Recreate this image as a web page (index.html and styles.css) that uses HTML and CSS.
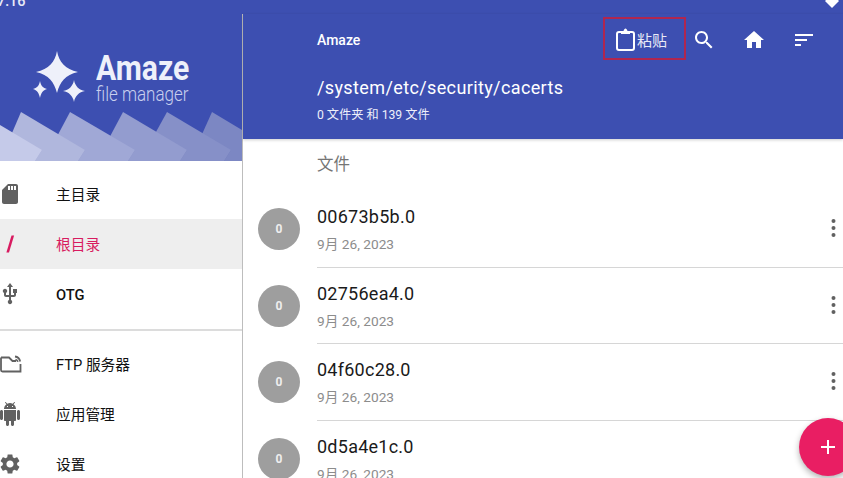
FILE: index.html
```html
<!DOCTYPE html>
<html lang="zh">
<head>
<meta charset="utf-8">
<title>Amaze</title>
<link rel="stylesheet" href="styles.css">
</head>
<body>
<div class="screen">
  <div class="statusbar">
    <span class="clock">7:16</span>
    <svg class="signal" viewBox="0 0 14 8"><path d="M0 1 7-6l7 7-7 7z"/></svg>
  </div>
  <div class="main">
    <aside class="drawer">
      <div class="hero">
        <svg class="hills" viewBox="0 0 242 147">
          <polygon points="212,98 242,116 242,147 190,147" fill="#7c87c3"/>
          <polygon points="231,136 224,147 190,147 205,136" fill="#6b76b9"/>
          <polygon points="167,98 231,136 224,147 140,147" fill="#8690c8"/>
          <polygon points="187,136 180,147 150,147 175,136" fill="#757fbe"/>
          <polygon points="123,98 187,136 180,147 97,147" fill="#939ccf"/>
          <polygon points="135,136 128,147 100,147 125,136" fill="#818bc5"/>
          <polygon points="70,98 135,136 128,147 44,147" fill="#a0a8d6"/>
          <polygon points="85,136 78,147 50,147 75,136" fill="#8c95cb"/>
          <polygon points="21,98 85,136 78,147 0,147" fill="#b0b7dd"/>
          <polygon points="42,136 35,147 20,147 32,136" fill="#9aa2d2"/>
          <polygon points="-5,108 42,136 35,147 -5,147" fill="#c5cae9"/>
        </svg>
        <div class="brand">
          <svg class="stars" viewBox="0 0 54 52">
            <path d="M24 0C26 11 32 18 45 21 32 24 27 31 24 42 21 31 16 24 3 21 16 18 22 11 24 0Z"/>
            <path d="M7 30C8 35 10 37 14 38 10 39 8 42 7 47 6 42 4 39 0 38 4 37 6 35 7 30Z"/>
            <path d="M41 29C42 35 46 39 52 40 46 41 42 45 41 51 40 45 36 41 30 40 36 39 40 35 41 29Z"/>
          </svg>
          <div class="brand-text">
            <span class="brand-name">Amaze</span>
            <span class="brand-sub">file manager</span>
          </div>
        </div>
      </div>
      <nav class="nav">
        <div class="nav-item">
          <svg class="nav-icon" viewBox="0 0 24 24"><path d="M18 2h-8L4.020 8 4 20c0 1.100.9 2 2 2h12c1.100 0 2-.9 2-2V4c0-1.100-.9-2-2-2zm-6 6h-2V4h2v4zm3 0h-2V4h2v4zm3 0h-2V4h2v4z"/></svg>
          <span>主目录</span>
        </div>
        <div class="nav-item active">
          <svg class="nav-icon" viewBox="0 0 24 24"><path d="M13.500 3.500h2.600L11 20.500H8.400z"/></svg>
          <span>根目录</span>
        </div>
        <div class="nav-item latin">
          <svg class="nav-icon" viewBox="0 0 24 24"><path d="M15 7v4h1v2h-3V5h2l-3-4-3 4h2v8H8v-2.070c.7-.37 1.200-1.080 1.200-1.930 0-1.210-.99-2.200-2.200-2.200-1.210 0-2.200.99-2.200 2.200 0 .85.5 1.560 1.200 1.930V13c0 1.110.89 2 2 2h3v3.050c-.71.37-1.200 1.100-1.200 1.950 0 1.220.99 2.200 2.200 2.200 1.210 0 2.200-.98 2.200-2.200 0-.85-.49-1.580-1.200-1.950V15h3c1.110 0 2-.89 2-2v-2h1V7h-4z"/></svg>
          <span>OTG</span>
        </div>
        <div class="nav-divider"></div>
        <div class="nav-item">
          <svg class="nav-icon ftp" viewBox="0 0 24 24"><path d="M3 5.500h8l3.500 3.500H18M3 5.500V18c0 1 .5 1.500 1.500 1.500h18V12"/><path d="M17 4.500c2.700.4 4.600 2.300 5.200 5M17.500 7.500c1.200.3 2 1 2.400 2.200"/></svg>
          <span>FTP 服务器</span>
        </div>
        <div class="nav-item">
          <svg class="nav-icon" viewBox="0 0 24 24"><path d="M6 18c0 .55.45 1 1 1h1v3.500c0 .83.67 1.500 1.500 1.500s1.500-.67 1.500-1.500V19h2v3.500c0 .83.67 1.500 1.500 1.500s1.500-.67 1.500-1.500V19h1c.55 0 1-.45 1-1V8H6v10zM3.500 8C2.670 8 2 8.670 2 9.500v7c0 .83.67 1.500 1.500 1.500S5 17.330 5 16.500v-7C5 8.670 4.330 8 3.500 8zm17 0c-.83 0-1.500.67-1.500 1.500v7c0 .83.67 1.500 1.500 1.500s1.500-.67 1.500-1.500v-7c0-.83-.67-1.500-1.500-1.500zm-4.970-5.840l1.300-1.300c.2-.2.2-.51 0-.71-.2-.2-.51-.2-.71 0l-1.480 1.480C13.850 1.230 12.950 1 12 1c-.96 0-1.860.23-2.660.63L7.850.15c-.2-.2-.51-.2-.71 0-.2.2-.2.51 0 .71l1.310 1.310C6.970 3.260 6 5.010 6 7h12c0-1.990-.97-3.750-2.470-4.840zM10 5H9V4h1v1zm5 0h-1V4h1v1z"/></svg>
          <span>应用管理</span>
        </div>
        <div class="nav-item">
          <svg class="nav-icon" viewBox="0 0 24 24"><path d="M19.140 12.940c.04-.3.06-.61.06-.94 0-.32-.02-.64-.07-.94l2.030-1.580c.18-.14.23-.41.12-.61l-1.920-3.320c-.12-.22-.37-.29-.59-.22l-2.390.96c-.5-.38-1.030-.7-1.620-.94l-.36-2.540c-.04-.24-.24-.41-.48-.41h-3.840c-.24 0-.43.17-.47.41l-.36 2.540c-.59.24-1.130.57-1.620.94l-2.390-.96c-.22-.08-.47 0-.59.22L2.740 8.870c-.12.21-.08.47.12.61l2.030 1.580c-.05.3-.09.63-.09.94s.02.64.07.94l-2.030 1.580c-.18.14-.23.41-.12.61l1.920 3.320c.12.22.37.29.59.22l2.390-.96c.5.38 1.030.7 1.620.94l.36 2.540c.05.24.24.41.48.41h3.840c.24 0 .44-.17.47-.41l.36-2.540c.59-.24 1.130-.56 1.620-.94l2.390.96c.22.08.47 0 .59-.22l1.920-3.320c.12-.22.07-.47-.12-.61l-2.010-1.580zM12 15.600c-1.980 0-3.600-1.620-3.600-3.600s1.620-3.600 3.600-3.600 3.600 1.620 3.600 3.600-1.620 3.600-3.600 3.600z"/></svg>
          <span>设置</span>
        </div>
      </nav>
    </aside>
    <section class="content">
      <header class="toolbar">
        <div class="toolbar-row">
          <span class="app-title">Amaze</span>
          <div class="actions">
            <div class="paste">
              <svg class="clip-icon" viewBox="0 0 19 23"><rect class="clip-body" x="1" y="4" width="17" height="18" rx="2"/><path d="M5 3h2.500C8 1.500 8.700.5 9.500.5S11 1.500 11.500 3H14v3H5z"/></svg>
              <span>粘贴</span>
            </div>
            <svg class="tool-icon" viewBox="0 0 24 24"><path d="M15.500 14h-.79l-.28-.27C15.410 12.590 16 11.110 16 9.500 16 5.910 13.090 3 9.500 3S3 5.910 3 9.500 5.910 16 9.500 16c1.610 0 3.090-.59 4.230-1.570l.27.28v.79l5 4.990L20.490 19l-4.990-5zm-6 0C7.010 14 5 11.990 5 9.500S7.010 5 9.500 5 14 7.010 14 9.500 11.990 14 9.500 14z"/></svg>
            <svg class="tool-icon" viewBox="0 0 24 24"><path d="M10 20v-6h4v6h5v-8h3L12 3 2 12h3v8z"/></svg>
            <svg class="tool-icon" viewBox="0 0 24 24"><path d="M3 18h6v-2H3v2zM3 6v2h18V6H3zm0 7h12v-2H3v2z"/></svg>
          </div>
        </div>
        <div class="path">/system/etc/security/cacerts</div>
        <div class="summary">0 文件夹 和 139 文件</div>
      </header>
      <div class="section-label">文件</div>
      <div class="file-list">
        <div class="file-row">
          <div class="thumb">0</div>
          <div class="file-body">
            <div class="file-text"><div class="file-name">00673b5b.0</div><div class="file-date">9月 26, 2023</div></div>
            <svg class="more" viewBox="0 0 4 18"><circle cx="2" cy="2" r="2"/><circle cx="2" cy="9" r="2"/><circle cx="2" cy="16" r="2"/></svg>
          </div>
        </div>
        <div class="file-row">
          <div class="thumb">0</div>
          <div class="file-body">
            <div class="file-text"><div class="file-name">02756ea4.0</div><div class="file-date">9月 26, 2023</div></div>
            <svg class="more" viewBox="0 0 4 18"><circle cx="2" cy="2" r="2"/><circle cx="2" cy="9" r="2"/><circle cx="2" cy="16" r="2"/></svg>
          </div>
        </div>
        <div class="file-row">
          <div class="thumb">0</div>
          <div class="file-body">
            <div class="file-text"><div class="file-name">04f60c28.0</div><div class="file-date">9月 26, 2023</div></div>
            <svg class="more" viewBox="0 0 4 18"><circle cx="2" cy="2" r="2"/><circle cx="2" cy="9" r="2"/><circle cx="2" cy="16" r="2"/></svg>
          </div>
        </div>
        <div class="file-row">
          <div class="thumb">0</div>
          <div class="file-body">
            <div class="file-text"><div class="file-name">0d5a4e1c.0</div><div class="file-date">9月 26, 2023</div></div>
          </div>
        </div>
      </div>
    </section>
  </div>
  <div class="highlight"></div>
  <div class="fab"><svg viewBox="0 0 24 24"><path d="M19 13h-6v6h-2v-6H5v-2h6V5h2v6h6v2z"/></svg></div>
</div>
</body>
</html>
```
FILE: styles.css
```css
* { box-sizing: border-box; }
html, body { margin: 0; padding: 0; }
body {
  width: 843px;
  height: 478px;
  overflow: hidden;
  background: #fff;
  font-family: Roboto, "Noto Sans CJK SC", sans-serif;
}
.screen {
  position: relative;
  width: 843px;
  height: 478px;
  overflow: hidden;
  display: flex;
  flex-direction: column;
}
.statusbar {
  flex: none;
  height: 14px;
  background: #3d4fb1;
  display: flex;
  justify-content: space-between;
  color: #fff;
  overflow: hidden;
}
.clock {
  margin-left: -3px;
  margin-top: -6px;
  font-size: 14.5px;
  line-height: 16px;
  font-weight: 500;
  color: #e8eaf6;
}
.signal {
  width: 14px;
  height: 8px;
  margin-right: 4px;
  fill: #fff;
  overflow: hidden;
}
.main {
  flex: 1;
  min-height: 0;
  display: flex;
}
.drawer {
  flex: none;
  width: 243px;
  border-right: 1px solid #bdbdbd;
  display: flex;
  flex-direction: column;
  overflow: hidden;
}
.hero {
  position: relative;
  flex: none;
  height: 147px;
  background: #3d4fb1;
  padding: 37px 0 0 33px;
}
.hills {
  position: absolute;
  left: 0;
  top: 0;
  width: 242px;
  height: 147px;
}
.brand {
  position: relative;
  display: flex;
  gap: 9px;
}
.stars {
  width: 54px;
  height: 52px;
  fill: #eef0fa;
}
.brand-text {
  display: flex;
  flex-direction: column;
  padding-top: 1px;
}
.brand-name {
  font-size: 35px;
  line-height: 33px;
  font-weight: 700;
  color: #eef0fa;
  transform-origin: left;
  transform: scaleX(0.86);
}
.brand-sub {
  font-size: 20px;
  line-height: 19px;
  font-weight: 300;
  color: #c9cfee;
  transform-origin: left;
  transform: scaleX(0.85);
  white-space: nowrap;
}
.nav {
  padding-top: 8px;
}
.nav-item {
  height: 50px;
  display: flex;
  align-items: center;
  gap: 46px;
  font-size: 14.7px;
  color: #111;
}
.nav-item span {
  padding-bottom: 2px;
}
.nav-item.latin span {
  padding-top: 4px;
  font-weight: 500;
}
.nav-item.active {
  background: #eeeeee;
  color: #d81b60;
}
.nav-icon {
  flex: none;
  width: 24px;
  height: 24px;
  margin-left: -2px;
  margin-right: -12px;
  fill: #616161;
}
.nav-icon.ftp {
  fill: none;
  stroke: #616161;
  stroke-width: 1.8;
}
.nav-item.active .nav-icon {
  fill: #d81b60;
}
.nav-divider {
  height: 2px;
  margin: 10px 0 8px;
  background: #dcdcdc;
}
.content {
  flex: 1;
  min-width: 0;
  display: flex;
  flex-direction: column;
}
.toolbar {
  flex: none;
  height: 125px;
  background: #3d4fb1;
  color: #fff;
  padding: 0 0 0 74px;
  box-shadow: 0 1px 3px rgba(0, 0, 0, 0.2);
}
.toolbar-row {
  height: 51px;
  display: flex;
  align-items: center;
  justify-content: space-between;
}
.app-title {
  font-size: 14px;
  font-weight: 500;
}
.actions {
  display: flex;
  align-items: center;
  gap: 26px;
  padding-right: 27px;
}
.paste {
  display: flex;
  align-items: center;
  gap: 2px;
  font-size: 15px;
  margin-right: -1px;
  color: #e8eaf6;
}
.clip-icon {
  width: 19px;
  height: 23px;
  fill: #fff;
}
.clip-body {
  fill: none;
  stroke: #fff;
  stroke-width: 2;
}
.tool-icon {
  width: 24px;
  height: 24px;
  fill: #fff;
}
.path {
  margin-top: 12px;
  font-size: 18px;
  line-height: 22px;
  letter-spacing: 0.38px;
}
.summary {
  margin-top: 8px;
  font-size: 12.2px;
  line-height: 16px;
  color: #eef0fa;
}
.section-label {
  flex: none;
  height: 52px;
  padding: 16px 0 0 74px;
  font-size: 16.5px;
  line-height: 20px;
  color: #757575;
}
.file-row {
  height: 76.5px;
  display: flex;
  align-items: stretch;
}
.thumb {
  flex: none;
  width: 42px;
  height: 42px;
  margin: 17px 17px 0 15px;
  border-radius: 50%;
  background: #9e9e9e;
  color: #eee;
  font-size: 12px;
  font-weight: 700;
  line-height: 42px;
  text-align: center;
}
.file-body {
  flex: 1;
  min-width: 0;
  display: flex;
  justify-content: space-between;
  border-bottom: 1px solid #d6d6d6;
  padding-right: 7px;
}
.file-name {
  margin-top: 15px;
  font-size: 18px;
  line-height: 22px;
  letter-spacing: 0.25px;
  color: #1a1a1a;
}
.file-date {
  margin-top: 7px;
  font-size: 13.7px;
  line-height: 18px;
  color: #8c8c8c;
}
.more {
  width: 5px;
  height: 18px;
  margin-top: 28px;
  fill: #616161;
}
.highlight {
  position: absolute;
  left: 603px;
  top: 17px;
  width: 83px;
  height: 43px;
  border: 2px solid #b0264f;
}
.fab {
  position: absolute;
  left: 799px;
  top: 418px;
  width: 58px;
  height: 58px;
  border-radius: 50%;
  background: #e91e63;
  box-shadow: 0 3px 6px rgba(0, 0, 0, 0.3);
  display: flex;
  align-items: center;
  justify-content: center;
}
.fab svg {
  width: 24px;
  height: 24px;
  fill: #fff;
}
```
